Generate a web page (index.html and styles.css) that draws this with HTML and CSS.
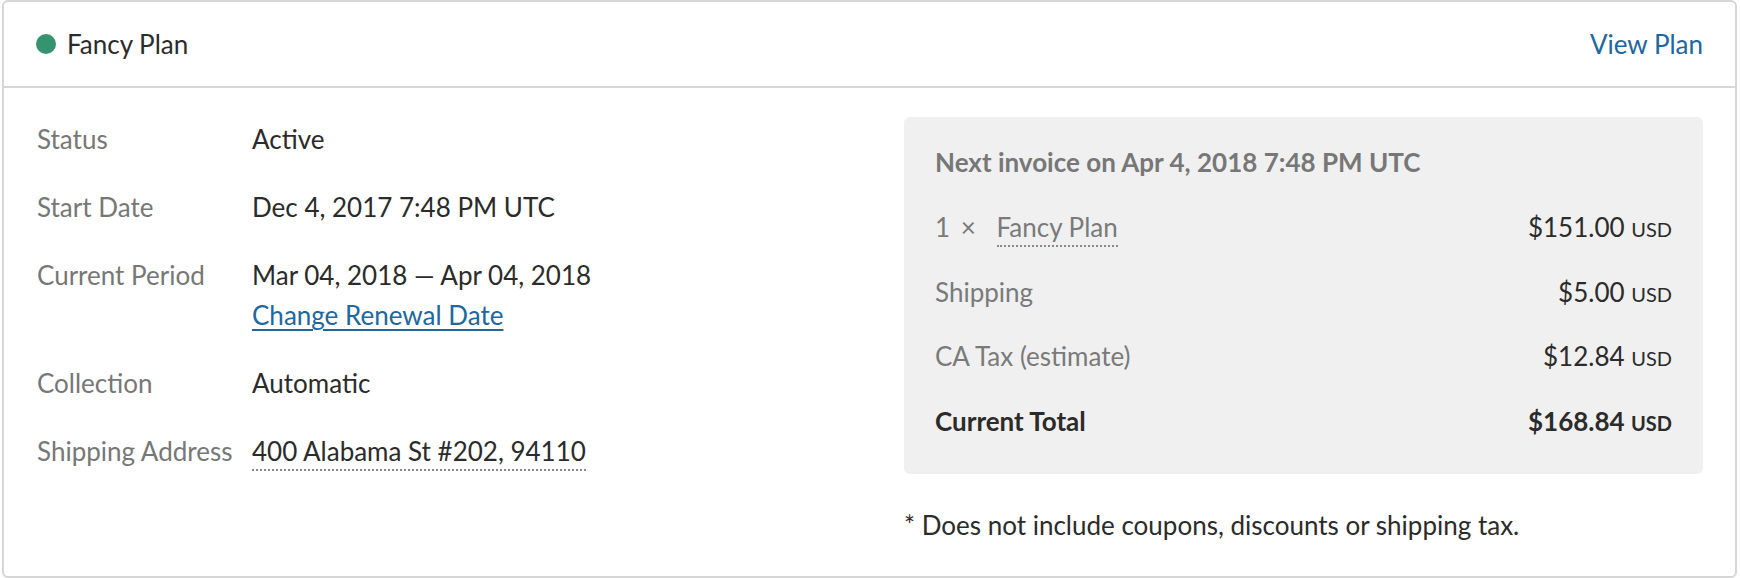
FILE: index.html
```html
<!DOCTYPE html>
<html lang="en">
<head>
  <meta charset="UTF-8">
  <title>Subscription - Fancy Plan</title>
  <link rel="stylesheet" href="styles.css">
</head>
<body>
  <div class="card">
    <!-- Plan header -->
    <div class="card-header">
      <div class="plan-name">
        <span class="status-dot"></span>
        <span>Fancy Plan</span>
      </div>
      <a class="link" href="#">View Plan</a>
    </div>

    <div class="card-body">
      <!-- Subscription details -->
      <div class="details">
        <div class="detail-row">
          <div class="detail-label">Status</div>
          <div class="detail-value">Active</div>
        </div>
        <div class="detail-row">
          <div class="detail-label">Start Date</div>
          <div class="detail-value">Dec 4, 2017 7:48 PM UTC</div>
        </div>
        <div class="detail-row">
          <div class="detail-label">Current Period</div>
          <div class="detail-value">
            Mar 04, 2018 — Apr 04, 2018<br>
            <a class="link underline" href="#">Change Renewal Date</a>
          </div>
        </div>
        <div class="detail-row">
          <div class="detail-label">Collection</div>
          <div class="detail-value">Automatic</div>
        </div>
        <div class="detail-row">
          <div class="detail-label">Shipping Address</div>
          <div class="detail-value"><span class="dotted">400 Alabama St #202, 94110</span></div>
        </div>
      </div>

      <!-- Upcoming invoice -->
      <div class="invoice-col">
        <div class="invoice-box">
          <div class="invoice-title">Next invoice on Apr 4, 2018 7:48 PM UTC</div>
          <div class="invoice-row">
            <div class="invoice-label">1 <span class="times">×</span> <span class="dotted">Fancy Plan</span></div>
            <div class="amount">$151.00 <span class="currency">USD</span></div>
          </div>
          <div class="invoice-row">
            <div class="invoice-label">Shipping</div>
            <div class="amount">$5.00 <span class="currency">USD</span></div>
          </div>
          <div class="invoice-row">
            <div class="invoice-label">CA Tax (estimate)</div>
            <div class="amount">$12.84 <span class="currency">USD</span></div>
          </div>
          <div class="invoice-row total">
            <div class="invoice-label">Current Total</div>
            <div class="amount">$168.84 <span class="currency">USD</span></div>
          </div>
        </div>
        <p class="footnote">* Does not include coupons, discounts or shipping tax.</p>
      </div>
    </div>
  </div>
</body>
</html>
```

FILE: styles.css
```css
/* Basic styling */
body {
  font-family: 'Lato', 'Noto Sans', sans-serif;
  font-size: 26px;
  line-height: 40px;
  color: #2b2b2b;
  background: #fff;
  margin: 0;
  padding: 0 3px 0 2px;
}

.card {
  border: 2px solid #d6d6d6;
  border-radius: 6px;
  height: 578px;
  box-sizing: border-box;
}

.card-header {
  display: flex;
  justify-content: space-between;
  align-items: center;
  height: 86px;
  padding: 0 32px;
  border-bottom: 2px solid #d6d6d6;
  box-sizing: border-box;
}

.plan-name {
  display: flex;
  align-items: center;
  gap: 11px;
}

.status-dot {
  width: 20px;
  height: 20px;
  border-radius: 50%;
  background: #35946f;
}

.link {
  color: #21679f;
  text-decoration: none;
}

.link.underline {
  text-decoration: underline;
  text-underline-offset: 4px;
}

.card-body {
  display: grid;
  grid-template-columns: 1fr 1fr;
  gap: 68px;
  padding: 29px 32px 0 33px;
}

.details {
  padding-top: 2px;
}

.detail-row {
  display: flex;
  margin-bottom: 28px;
}

.detail-label {
  width: 215px;
  flex-shrink: 0;
  color: #777;
}

.dotted {
  border-bottom: 2px dotted #888;
  padding-bottom: 2px;
}

.invoice-box {
  background: #f0f0f0;
  border-radius: 6px;
  padding: 25px 31px 33px 31px;
}

.invoice-title {
  font-weight: bold;
  color: #777;
  margin-bottom: 25px;
}

.invoice-row {
  display: flex;
  justify-content: space-between;
  margin-bottom: 24.5px;
}

.invoice-row:last-child {
  margin-bottom: 0;
}

.invoice-label {
  color: #7a7a7a;
}

.times {
  margin: 0 14px 0 4px;
}

.currency {
  font-size: 20px;
  line-height: 1;
}

.total .invoice-label,
.total .amount {
  font-weight: bold;
  color: #2b2b2b;
}

.footnote {
  margin: 31px 0 0 0;
}
```
